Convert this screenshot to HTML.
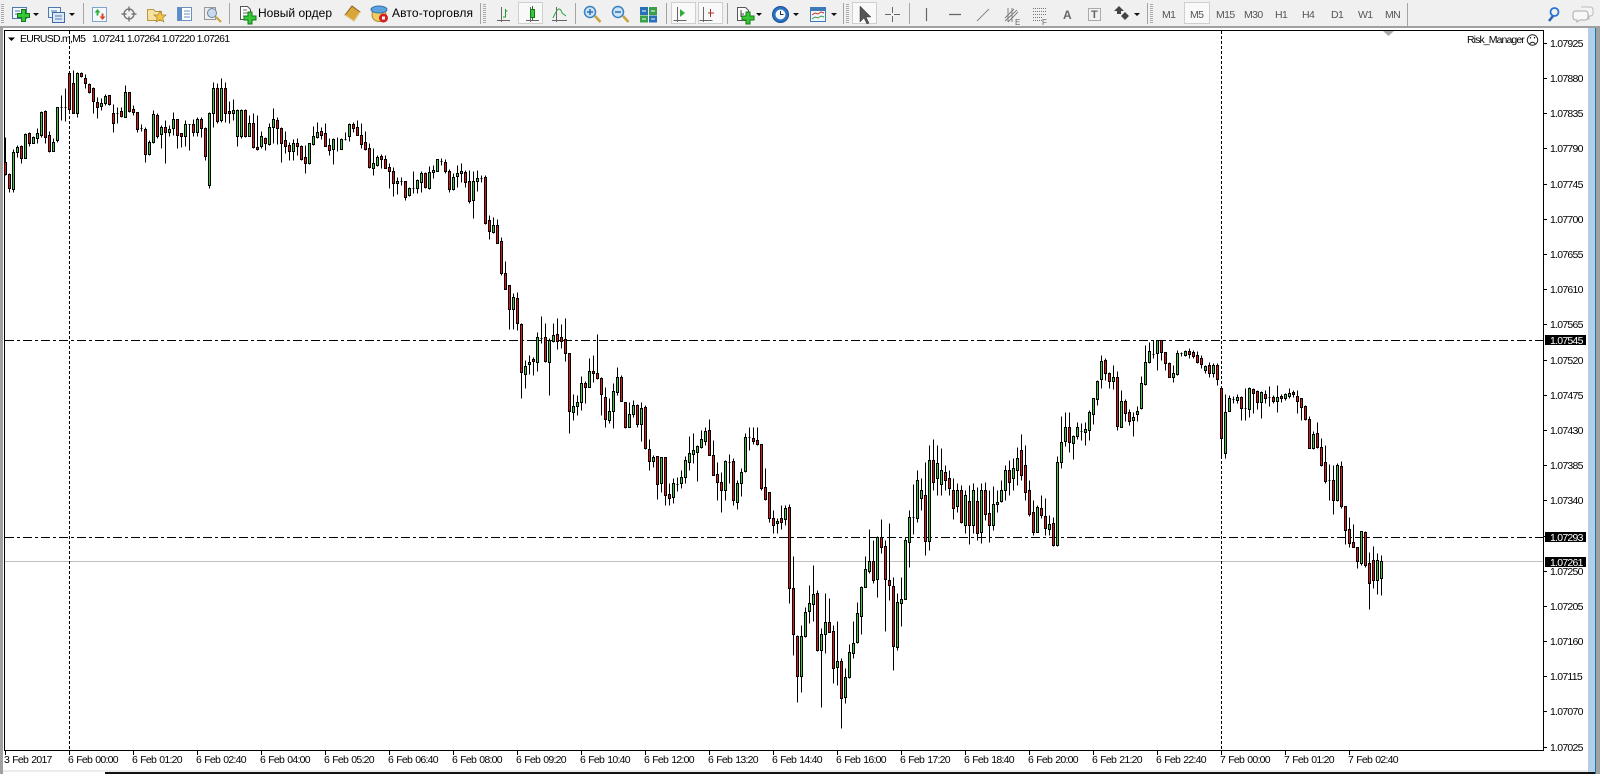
<!DOCTYPE html>
<html><head><meta charset="utf-8"><title>EURUSD.m,M5</title>
<style>
html,body{margin:0;padding:0;background:#fff;width:1600px;height:774px;overflow:hidden}
svg{display:block;position:absolute;left:0;top:0}
text{font-family:"Liberation Sans","Noto Sans CJK SC",sans-serif;fill:#000}
.a text,.a{font-size:10.5px;letter-spacing:-.75px}
.t text{word-spacing:1px}
.tf text{font-size:10.5px;letter-spacing:-.6px;fill:#555}
.bx{fill:#fff}
.gt{fill:#666}
</style></head><body>
<svg width="1600" height="774" viewBox="0 0 1600 774" xmlns="http://www.w3.org/2000/svg">
<defs><path id="plus" d="M-2-6h4v4h4v4h-4v4h-4v-4h-4v-4h4z" fill="#35c935" stroke="#16761a"/></defs>
<!-- frame -->
<rect width="1600" height="774" fill="#fff"/>
<rect x="0" y="0" width="1600" height="26" fill="#f0f0f0"/>
<rect x="0" y="26" width="1600" height="2" fill="#a0a0a0"/>
<rect x="0" y="28" width="3" height="746" fill="#a0a0a0"/>
<rect x="1588" y="28" width="7" height="746" fill="#b4cde8"/>
<rect x="1595" y="28" width="1" height="746" fill="#0a80a8"/>
<rect x="1596" y="28" width="4" height="746" fill="#a0a0a0"/>
<rect x="105" y="772" width="1490" height="2" fill="#111"/>
<rect x="3" y="770" width="1585" height="2" fill="#ececec"/>
<!-- chart lines -->
<g shape-rendering="crispEdges" fill="none">
<path d="M5 561.5H1543" stroke="#c0c0c0"/>
<path d="M5 340.5H1543M5 537.5H1543" stroke="#000" stroke-dasharray="9 3 3 3"/>
<path d="M69.5 31V750M1221.5 31V750" stroke="#000" stroke-dasharray="3 2"/>
</g>
<!-- candles -->
<g transform="translate(.5 .5)" shape-rendering="crispEdges" stroke="#000" stroke-width="1">
<path fill="none" d="M5 137V175M9 173V192M13 149V192M17 145V157M21 145V163M25 133V158M29 132V146M33 136V143M37 128V143M41 111V137M45 110V143M49 131V152M53 138V151M57 107V142M61 95V120M65 88V121M69 72V113M73 70V113M77 72V117M81 72V77M85 74V88M89 83V93M93 87V113M97 97V118M101 98V110M105 94V105M109 95V105M113 104V132M117 107V123M121 107V117M125 85V117M129 92V112M133 105V115M137 112V132M141 124V131M145 127V162M149 140V155M153 110V143M157 113V138M161 125V148M165 120V163M169 125V136M173 112V135M177 119V148M181 133V147M185 120V146M189 124V150M193 119V136M197 117V136M201 117V137M205 127V160M209 112V188M213 82V127M217 83V123M221 78V122M225 82V122M229 101V123M233 99V120M237 109V146M241 109V138M245 109V137M249 115V136M253 113V148M257 115V150M261 131V148M265 137V150M269 123V145M273 108V143M277 117V144M281 127V162M285 131V153M289 142V160M293 139V160M297 138V155M301 145V160M305 145V173M309 143V164M313 126V145M317 122V138M321 127V139M325 123V146M329 138V155M333 138V164M337 137V151M341 138V149M345 132V140M349 123V141M353 122V132M357 120V135M361 123V148M365 131V150M369 143V168M373 148V175M377 155V166M381 154V168M385 155V168M389 163V188M393 167V196M397 177V194M401 177V185M405 181V200M409 187V196M413 171V193M417 179V193M421 171V192M425 172V188M429 166V189M433 165V178M437 159V171M441 158V165M445 159V173M449 169V192M453 173V190M457 165V187M461 163V182M465 170V187M469 170V203M473 171V218M477 170V191M481 175V182M485 175V224M489 215V239M493 217V233M497 219V243M501 237V275M505 261V289M509 285V329M513 293V329M517 292V330M521 323V398M525 360V388M529 355V374M533 357V375M537 332V371M541 316V343M545 323V362M549 338V395M553 323V342M557 318V349M561 324V348M565 318V361M569 353V433M573 394V420M577 395V415M581 376V410M585 381V403M589 358V387M593 355V382M597 334V379M601 377V415M605 387V427M609 398V423M613 383V428M617 367V395M621 375V401M625 402V428M629 402V427M633 400V417M637 404V427M641 402V441M645 405V449M649 439V470M653 455V467M657 456V499M661 457V492M665 457V505M669 483V505M673 478V503M677 477V491M681 470V488M685 456V483M689 436V470M693 433V463M697 445V481M701 430V448M705 427V445M709 419V455M713 440V475M717 462V500M721 472V512M725 460V500M729 454V483M733 458V505M737 480V509M741 468V496M745 433V472M749 427V450M753 427V444M757 427V445M761 444V490M765 468V500M769 492V522M773 510V533M777 518V533M781 505V529M785 505V525M789 504V603M793 556V655M797 635V702M801 625V692M805 607V637M809 585V623M813 565V621M817 590V651M821 628V707M825 593V653M829 598V632M833 625V683M837 621V685M841 658V728M845 668V703M849 644V678M853 621V658M857 602V643M861 586V634M865 556V587M869 529V573M873 540V583M877 536V597M881 519V553M885 540V631M889 523V600M893 577V670M897 593V650M901 577V626M905 537V599M909 510V567M913 484V534M917 470V522M921 478V510M925 462V555M929 445V550M933 439V490M937 445V495M941 448V495M945 465V490M949 470V495M953 478V519M957 483V512M961 485V523M965 490V533M969 485V544M973 483V533M977 487V540M981 483V543M985 482V520M989 490V542M993 486V530M997 490V512M1001 480V502M1005 465V500M1009 460V495M1013 458V490M1017 447V485M1021 434V480M1025 445V500M1029 480V516M1033 500V535M1037 505V532M1041 495V518M1045 498V535M1049 515V535M1053 517V546M1057 456V546M1061 416V468M1065 412V446M1069 412V452M1073 435V459M1077 422V439M1081 423V440M1085 422V445M1089 410V440M1093 398V424M1097 380V405M1101 355V388M1105 358V380M1109 372V388M1113 365V389M1117 371V430M1121 390V427M1125 399V421M1129 409V425M1133 412V436M1137 406V421M1141 376V409M1145 345V385M1149 342V363M1153 340V358M1157 340V370M1161 340V360M1165 352V370M1169 362V377M1173 365V382M1177 350V375M1181 352V356M1185 350V356M1189 348V358M1193 350V358M1197 351V363M1201 355V368M1205 365V373M1209 362V377M1213 363V377M1217 363V385M1221 388V458M1225 394V458M1229 395V411M1233 396V403M1237 394V403M1241 396V420M1245 388V420M1249 387V417M1253 388V413M1257 390V409M1261 391V418M1265 390V403M1269 386V406M1273 395V403M1277 385V412M1281 394V402M1285 393V400M1289 388V398M1293 390V397M1297 390V413M1301 398V420M1305 405V420M1309 416V448M1313 431V449M1317 422V448M1321 438V466M1325 445V483M1329 464V500M1333 465V514M1337 463V501M1341 461V508M1345 506V544M1349 517V547M1353 524V547M1357 547V568M1361 531V565M1365 531V567M1369 552V609M1373 546V588M1377 553V594M1381 555V595M60 107h2M64 107h2M116 113h2M140 128h2M188 124h2M344 139h2M400 181h2M412 188h2M440 161h2M480 178h2M540 338h2M676 484h2M728 462h2M748 437h2M912 517h2M1080 431h2M1152 354h2M1180 353h2M1232 399h2M1244 408h2M1268 397h2M1328 480h2"/>
<path fill="#3cc83c" d="M12 152h2V189h-2zM16 147h2V152h-2zM24 134h2V158h-2zM32 137h2V143h-2zM36 133h2V138h-2zM40 112h2V135h-2zM52 142h2V151h-2zM56 107h2V140h-2zM76 73h2V113h-2zM100 103h2V106h-2zM104 96h2V103h-2zM124 92h2V117h-2zM148 142h2V154h-2zM152 114h2V142h-2zM160 127h2V134h-2zM168 129h2V132h-2zM172 119h2V128h-2zM184 124h2V136h-2zM196 119h2V132h-2zM208 113h2V185h-2zM212 88h2V113h-2zM220 88h2V120h-2zM232 110h2V113h-2zM236 110h2V136h-2zM240 110h2V136h-2zM248 123h2V136h-2zM260 136h2V146h-2zM268 127h2V144h-2zM272 119h2V127h-2zM292 143h2V151h-2zM308 143h2V163h-2zM312 136h2V144h-2zM316 132h2V137h-2zM332 139h2V149h-2zM340 139h2V149h-2zM348 124h2V136h-2zM372 163h2V168h-2zM376 157h2V165h-2zM396 181h2V183h-2zM408 188h2V195h-2zM416 180h2V188h-2zM420 173h2V182h-2zM428 172h2V188h-2zM432 170h2V172h-2zM436 159h2V171h-2zM452 177h2V189h-2zM456 173h2V176h-2zM460 171h2V173h-2zM472 181h2V200h-2zM476 178h2V181h-2zM492 225h2V232h-2zM512 297h2V309h-2zM524 366h2V374h-2zM528 362h2V364h-2zM536 337h2V362h-2zM548 340h2V362h-2zM552 335h2V341h-2zM572 406h2V412h-2zM576 402h2V406h-2zM580 383h2V402h-2zM588 371h2V387h-2zM608 411h2V420h-2zM612 391h2V411h-2zM616 377h2V392h-2zM628 414h2V427h-2zM632 405h2V414h-2zM640 408h2V424h-2zM652 457h2V461h-2zM660 457h2V483h-2zM672 483h2V497h-2zM680 477h2V483h-2zM684 460h2V477h-2zM688 453h2V462h-2zM692 450h2V454h-2zM696 446h2V452h-2zM700 439h2V447h-2zM704 431h2V441h-2zM724 461h2V490h-2zM736 483h2V502h-2zM740 472h2V483h-2zM744 437h2V471h-2zM776 521h2V523h-2zM784 508h2V519h-2zM800 636h2V676h-2zM804 612h2V636h-2zM808 603h2V611h-2zM812 594h2V604h-2zM820 634h2V650h-2zM824 622h2V634h-2zM836 661h2V667h-2zM844 677h2V697h-2zM848 652h2V677h-2zM852 643h2V653h-2zM856 613h2V642h-2zM860 587h2V616h-2zM864 569h2V587h-2zM868 561h2V571h-2zM876 537h2V579h-2zM896 602h2V647h-2zM900 599h2V603h-2zM904 540h2V599h-2zM908 517h2V542h-2zM916 480h2V518h-2zM920 490h2V498h-2zM928 460h2V541h-2zM936 463h2V478h-2zM940 470h2V484h-2zM956 490h2V506h-2zM964 495h2V525h-2zM972 490h2V525h-2zM980 490h2V532h-2zM992 504h2V525h-2zM996 502h2V504h-2zM1000 490h2V501h-2zM1004 470h2V490h-2zM1012 468h2V478h-2zM1016 458h2V470h-2zM1036 507h2V532h-2zM1048 524h2V529h-2zM1056 462h2V545h-2zM1060 442h2V462h-2zM1064 427h2V441h-2zM1072 436h2V443h-2zM1076 427h2V436h-2zM1084 429h2V432h-2zM1088 412h2V430h-2zM1092 398h2V414h-2zM1096 381h2V399h-2zM1100 361h2V379h-2zM1112 377h2V381h-2zM1120 401h2V427h-2zM1132 417h2V420h-2zM1136 411h2V414h-2zM1140 383h2V408h-2zM1144 362h2V384h-2zM1148 351h2V362h-2zM1156 340h2V353h-2zM1172 373h2V377h-2zM1176 353h2V374h-2zM1184 351h2V355h-2zM1204 366h2V370h-2zM1212 365h2V373h-2zM1224 412h2V453h-2zM1228 398h2V411h-2zM1236 397h2V400h-2zM1248 388h2V409h-2zM1260 392h2V402h-2zM1276 397h2V401h-2zM1284 394h2V398h-2zM1288 393h2V396h-2zM1312 434h2V448h-2zM1336 465h2V500h-2zM1360 531h2V563h-2zM1376 560h2V580h-2zM1380 561h2V578h-2z"/>
<path fill="#e01414" d="M4 162h2V174h-2zM8 174h2V188h-2zM20 146h2V158h-2zM28 133h2V143h-2zM44 111h2V137h-2zM48 135h2V151h-2zM68 73h2V109h-2zM72 83h2V113h-2zM80 73h2V76h-2zM84 78h2V83h-2zM88 84h2V92h-2zM92 88h2V101h-2zM96 102h2V107h-2zM108 95h2V104h-2zM112 113h2V123h-2zM120 111h2V116h-2zM128 92h2V111h-2zM132 109h2V112h-2zM136 112h2V129h-2zM144 129h2V154h-2zM156 115h2V136h-2zM164 127h2V132h-2zM176 119h2V135h-2zM180 133h2V136h-2zM192 124h2V132h-2zM200 119h2V128h-2zM204 128h2V156h-2zM216 88h2V121h-2zM224 88h2V113h-2zM228 111h2V113h-2zM244 110h2V136h-2zM252 123h2V147h-2zM256 147h2V149h-2zM264 138h2V143h-2zM276 120h2V128h-2zM280 128h2V143h-2zM284 140h2V146h-2zM288 145h2V151h-2zM296 143h2V146h-2zM300 146h2V159h-2zM304 157h2V163h-2zM320 131h2V135h-2zM324 133h2V146h-2zM328 145h2V150h-2zM352 124h2V128h-2zM356 127h2V135h-2zM360 135h2V144h-2zM364 142h2V149h-2zM368 148h2V167h-2zM380 156h2V159h-2zM384 159h2V168h-2zM388 167h2V171h-2zM392 171h2V183h-2zM404 181h2V197h-2zM424 173h2V187h-2zM444 162h2V171h-2zM448 171h2V189h-2zM464 172h2V182h-2zM468 181h2V201h-2zM484 177h2V223h-2zM488 220h2V231h-2zM496 225h2V243h-2zM500 241h2V273h-2zM504 273h2V289h-2zM508 285h2V309h-2zM516 298h2V323h-2zM520 324h2V372h-2zM532 359h2V361h-2zM544 337h2V361h-2zM556 334h2V341h-2zM560 337h2V341h-2zM564 339h2V353h-2zM568 353h2V411h-2zM584 383h2V387h-2zM592 371h2V373h-2zM596 373h2V378h-2zM600 378h2V394h-2zM604 397h2V419h-2zM620 377h2V401h-2zM624 402h2V427h-2zM636 405h2V424h-2zM644 407h2V448h-2zM648 449h2V461h-2zM656 456h2V484h-2zM664 457h2V495h-2zM668 494h2V498h-2zM708 430h2V455h-2zM712 455h2V475h-2zM716 474h2V482h-2zM720 482h2V490h-2zM732 461h2V500h-2zM752 438h2V441h-2zM756 440h2V444h-2zM760 444h2V488h-2zM764 487h2V499h-2zM768 492h2V518h-2zM772 518h2V525h-2zM780 518h2V522h-2zM788 507h2V588h-2zM792 588h2V634h-2zM796 636h2V676h-2zM816 593h2V650h-2zM828 622h2V632h-2zM832 631h2V668h-2zM840 661h2V698h-2zM872 561h2V580h-2zM880 537h2V547h-2zM884 546h2V579h-2zM888 580h2V585h-2zM892 586h2V646h-2zM924 495h2V541h-2zM932 460h2V482h-2zM944 472h2V480h-2zM948 478h2V488h-2zM952 490h2V508h-2zM960 490h2V522h-2zM968 501h2V525h-2zM976 501h2V533h-2zM984 490h2V514h-2zM988 513h2V525h-2zM1008 470h2V482h-2zM1020 450h2V475h-2zM1024 465h2V492h-2zM1028 490h2V514h-2zM1032 512h2V532h-2zM1040 508h2V515h-2zM1044 516h2V528h-2zM1052 523h2V545h-2zM1068 427h2V442h-2zM1104 360h2V373h-2zM1108 373h2V381h-2zM1116 377h2V426h-2zM1124 401h2V413h-2zM1128 412h2V421h-2zM1160 340h2V352h-2zM1164 352h2V363h-2zM1168 363h2V377h-2zM1188 351h2V354h-2zM1192 352h2V356h-2zM1196 355h2V362h-2zM1200 358h2V364h-2zM1208 365h2V373h-2zM1216 365h2V379h-2zM1220 388h2V438h-2zM1240 397h2V408h-2zM1252 389h2V393h-2zM1256 391h2V402h-2zM1264 394h2V398h-2zM1272 397h2V401h-2zM1280 396h2V398h-2zM1292 392h2V394h-2zM1296 396h2V401h-2zM1300 398h2V407h-2zM1304 406h2V419h-2zM1308 419h2V448h-2zM1316 433h2V447h-2zM1320 447h2V465h-2zM1324 462h2V481h-2zM1332 480h2V500h-2zM1340 466h2V506h-2zM1344 506h2V530h-2zM1348 529h2V543h-2zM1352 542h2V547h-2zM1356 547h2V561h-2zM1364 532h2V565h-2zM1368 563h2V583h-2zM1372 560h2V580h-2z"/>
</g>
<!-- chart border and axes -->
<g shape-rendering="crispEdges" fill="none" stroke="#000">
<path d="M4.5 30.5H1543.5V750.5H4.5Z"/>
<path d="M1543 43.5h4M1543 78.5h4M1543 113.5h4M1543 148.5h4M1543 184.5h4M1543 219.5h4M1543 254.5h4M1543 289.5h4M1543 324.5h4M1543 360.5h4M1543 395.5h4M1543 430.5h4M1543 465.5h4M1543 500.5h4M1543 536.5h4M1543 571.5h4M1543 606.5h4M1543 641.5h4M1543 676.5h4M1543 711.5h4M1543 747.5h4"/>
<path d="M5.5 750v5M69.5 750v5M133.5 750v5M197.5 750v5M261.5 750v5M325.5 750v5M389.5 750v5M453.5 750v5M517.5 750v5M581.5 750v5M645.5 750v5M709.5 750v5M773.5 750v5M837.5 750v5M901.5 750v5M965.5 750v5M1029.5 750v5M1093.5 750v5M1157.5 750v5M1221.5 750v5M1285.5 750v5M1349.5 750v5"/>
</g>
<g class="a">
<text x="1550" y="47">1.07925</text><text x="1550" y="82">1.07880</text><text x="1550" y="117">1.07835</text><text x="1550" y="152">1.07790</text><text x="1550" y="188">1.07745</text><text x="1550" y="223">1.07700</text><text x="1550" y="258">1.07655</text><text x="1550" y="293">1.07610</text><text x="1550" y="328">1.07565</text><text x="1550" y="364">1.07520</text><text x="1550" y="399">1.07475</text><text x="1550" y="434">1.07430</text><text x="1550" y="469">1.07385</text><text x="1550" y="504">1.07340</text><text x="1550" y="575">1.07250</text><text x="1550" y="610">1.07205</text><text x="1550" y="645">1.07160</text><text x="1550" y="680">1.07115</text><text x="1550" y="715">1.07070</text><text x="1550" y="751">1.07025</text>
<rect x="1545" y="335" width="41" height="10" fill="#000"/><text class="bx" x="1550" y="344">1.07545</text>
<rect x="1545" y="532" width="41" height="10" fill="#000"/><text class="bx" x="1550" y="541">1.07293</text>
<rect x="1545" y="557" width="41" height="10" fill="#000"/><text class="bx" x="1550" y="566">1.07261</text>
<g class="t"><text x="4" y="763">3 Feb 2017</text><text x="68" y="763">6 Feb 00:00</text><text x="132" y="763">6 Feb 01:20</text><text x="196" y="763">6 Feb 02:40</text><text x="260" y="763">6 Feb 04:00</text><text x="324" y="763">6 Feb 05:20</text><text x="388" y="763">6 Feb 06:40</text><text x="452" y="763">6 Feb 08:00</text><text x="516" y="763">6 Feb 09:20</text><text x="580" y="763">6 Feb 10:40</text><text x="644" y="763">6 Feb 12:00</text><text x="708" y="763">6 Feb 13:20</text><text x="772" y="763">6 Feb 14:40</text><text x="836" y="763">6 Feb 16:00</text><text x="900" y="763">6 Feb 17:20</text><text x="964" y="763">6 Feb 18:40</text><text x="1028" y="763">6 Feb 20:00</text><text x="1092" y="763">6 Feb 21:20</text><text x="1156" y="763">6 Feb 22:40</text><text x="1220" y="763">7 Feb 00:00</text><text x="1284" y="763">7 Feb 01:20</text><text x="1348" y="763">7 Feb 02:40</text></g>
<text x="20" y="42">EURUSD.m,M5</text><text x="92" y="42">1.07241 1.07264 1.07220 1.07261</text>
<text x="1467" y="43" textLength="57">Risk_Manager</text>
</g>
<path d="M8 37.5h7l-3.500 3.500z" fill="#000"/>
<path d="M1383 31h11l-5.500 5z" fill="#aaa"/>
<g fill="none" stroke="#222"><circle cx="1532.500" cy="40" r="5.200"/><path d="M1529.500 44q3-3.500 6 0"/><path d="M1530.500 37v1.500M1534.500 37v1.500" stroke-width="1.200"/></g>
<!-- toolbar pressed buttons -->
<g fill="#f9f9f9" stroke="#cfcfcf" shape-rendering="crispEdges">
<rect x="518.500" y="2.500" width="24" height="21"/><rect x="671.500" y="2.500" width="24" height="21"/><rect x="698.500" y="2.500" width="24" height="21"/><rect x="852.500" y="2.500" width="24" height="21"/><rect x="1184.500" y="2.500" width="25" height="21"/>
</g>
<!-- separators / grips -->
<path shape-rendering="crispEdges" stroke="#a4a4a4" fill="none" d="M83.500 3V24M229.500 3V24M480.500 3V24M575.500 3V24M666.500 3V24M727.500 3V24M843.500 3V24M909.500 3V24M1147.500 3V24M1407.500 3V26"/>
<path shape-rendering="crispEdges" stroke="#aaa" stroke-width="3" stroke-dasharray="1 1" fill="none" d="M2.500 4V24M484.500 4V24M847.500 4V24M1151.500 4V24"/>
<!-- dropdown arrows -->
<path fill="#111" d="M33 13h6l-3 3zM69 13h6l-3 3zM756 13h6l-3 3zM793 13h6l-3 3zM831 13h6l-3 3zM1134 13h6l-3 3z"/>
<!-- new chart -->
<rect x="12.500" y="7.500" width="14" height="11" fill="#f2f7fd" stroke="#4f78ad"/><path d="M15 11h5M15 14h4" stroke="#4f78ad"/><use href="#plus" x="23.500" y="15.500"/>
<!-- profiles -->
<rect x="48.500" y="7.500" width="12" height="10" fill="#eef4fb" stroke="#4f78ad"/><rect x="52.500" y="12.500" width="12" height="10" fill="#dbe8f7" stroke="#3e6aa3"/><path d="M51 11h6M55 16h7M55 19h7" stroke="#4f78ad"/>
<!-- market watch -->
<rect x="92.500" y="7.500" width="14" height="14" fill="#f5f9fd" stroke="#7da4cc"/><path d="M97.500 9l3 3.500h-2v3h-2v-3h-2z" fill="#2fae3d"/><path d="M102.500 20l3-3.500h-2v-3h-2v3h-2z" fill="#d84a20"/>
<!-- crosshair circle -->
<g fill="none" stroke="#777" stroke-width="1.400"><circle cx="129" cy="14" r="5"/><path d="M129 6.500v5M129 16.500v5M121.500 14h5M131.500 14h5"/></g>
<!-- folder star -->
<path d="M147.500 9.500h6l2 2h6v9h-14z" fill="#f6e2a0" stroke="#b8983c"/><path d="M160 11l1.800 4h4.200l-3.300 2.800 1.100 4.200-3.800-2.300-3.800 2.300 1.100-4.200-3.300-2.800h4.200z" fill="#f2c746" stroke="#a8842a" stroke-width=".7"/>
<!-- navigator -->
<rect x="177.500" y="7.500" width="14" height="13" fill="#fff" stroke="#6a8fc0"/><rect x="178" y="8" width="4" height="12" fill="#5b8cc8"/><path d="M184 11h6M184 14h6M184 17h6" stroke="#6a8fc0"/>
<!-- magnifier doc -->
<rect x="204.500" y="7.500" width="11" height="12" fill="#eee" stroke="#999"/><path d="M216 17l5 5" stroke="#c9a23a" stroke-width="2"/><circle cx="212" cy="13" r="4.500" fill="#c8dbee" stroke="#6f84a0"/>
<!-- new order -->
<path d="M240.500 6.500h7l3 3v10h-10z" fill="#fff" stroke="#555"/><path d="M243 10h4M243 13h5M243 16h3" stroke="#666"/><use href="#plus" x="250" y="18"/>
<text x="258" y="17" font-size="12" textLength="74">Новый ордер</text>
<!-- book -->
<path d="M345 15l7-9 8 6-6 9z" fill="#d8a63a" stroke="#8a6420"/><path d="M345 15l9 6 6-9" fill="none" stroke="#f2d68a"/>
<!-- auto -->
<ellipse cx="379" cy="15" rx="7" ry="6.500" fill="#f0cc60" stroke="#a8882c"/><ellipse cx="379" cy="9.500" rx="8" ry="3.500" fill="#5ba4e0" stroke="#2f6fa8"/><circle cx="383.500" cy="18" r="4.500" fill="#d42020"/><rect x="382" y="16.500" width="3" height="3" fill="#fff"/>
<text x="392" y="17" font-size="12" textLength="81">Авто-торговля</text>
<!-- chart type icons -->
<g fill="none" stroke="#666"><path d="M501.500 7v15M497 20.500h13M530.500 7v15M526 20.500h13M556.500 7v15M552 20.500h15M677.500 7v15M673.500 20.500h13M703.500 7v15M699.500 20.500h13"/></g>
<path d="M505.500 9v8M503 17h3M505.500 11h2" fill="none" stroke="#1f9a2e"/>
<rect x="530.500" y="9.500" width="4" height="8" fill="#35c935" stroke="#16761a"/><path d="M532.500 6v3M532.500 18v2" stroke="#16761a"/>
<path d="M553 18q4-9 6-9t3 4l4 3" fill="none" stroke="#2aa03a"/>
<path d="M680 9l5 4-5 4z" fill="#2fae3d"/><path d="M708 13h6M710.500 9v8" stroke="#b03020"/>
<!-- zoom in/out -->
<path d="M595 16l5.500 6" stroke="#c9a23a" stroke-width="2.500"/><circle cx="590" cy="12" r="5.500" fill="#cfe4f7" stroke="#3a80c0" stroke-width="1.500"/><path d="M587 12h6M590 9v6" stroke="#2a6fb0" stroke-width="1.500"/>
<path d="M623 16l5.500 6" stroke="#c9a23a" stroke-width="2.500"/><circle cx="618" cy="12" r="5.500" fill="#cfe4f7" stroke="#3a80c0" stroke-width="1.500"/><path d="M615 12h6" stroke="#2a6fb0" stroke-width="1.500"/>
<!-- tile -->
<rect x="640" y="7" width="8" height="8" fill="#2a70b8"/><rect x="649" y="7" width="8" height="8" fill="#3aa048"/><rect x="640" y="15.500" width="8" height="7" fill="#3aa048"/><rect x="649" y="15.500" width="8" height="7" fill="#2a70b8"/><path d="M642 11h4M651 11h4M642 19h4M651 19h4" stroke="#fff"/>
<!-- indicators -->
<path d="M737.500 7.500h8l3 3v10h-11z" fill="#fff" stroke="#555"/><path d="M741 10v7M741 14h3" stroke="#444"/><use href="#plus" x="748" y="18"/>
<!-- clock -->
<circle cx="780.500" cy="14.500" r="8" fill="#2a72c4" stroke="#1b4f94"/><circle cx="780.500" cy="14.500" r="5" fill="#f4f7fb"/><path d="M780.500 11v3.500h3" fill="none" stroke="#333"/>
<!-- templates -->
<rect x="810.500" y="7.500" width="15" height="14" fill="#f0f6fc" stroke="#3d78b8"/><rect x="811" y="8" width="14" height="3" fill="#3d78b8"/><path d="M812 15l3-2 3 1 3-2 3 1" fill="none" stroke="#c83020"/><path d="M812 19l3-2 3 1 3-2 3 1" fill="none" stroke="#2fa03a"/>
<!-- cursor -->
<path d="M860 6v16l4-4 3 6 2-1-3-6h5z" fill="#555" stroke="#333" stroke-width=".5"/>
<!-- crosshair -->
<path d="M885 14.500h6M894 14.500h6M892.500 7v6M892.500 16v6" stroke="#666" fill="none"/>
<!-- line tools -->
<path d="M926.500 8v13M949 14.500h12" stroke="#666" fill="none" stroke-width="1.200"/><path d="M977 21l12-12" stroke="#888" fill="none"/>
<path d="M1005 18l9-9M1005 21l12-11M1008 22l10-10M1008 8v14M1012 8v14" stroke="#777" fill="none" stroke-width=".9"/>
<text class="gt" x="1015" y="25" font-size="8">E</text>
<path d="M1033 8.500h13M1033 11.500h13M1033 14.500h13M1033 17.500h9M1033 20.500h9" stroke="#777" stroke-dasharray="1 1" fill="none"/>
<text class="gt" x="1042" y="25" font-size="8">F</text>
<text class="gt" x="1063" y="19" font-size="12" font-weight="bold">A</text>
<rect x="1088.500" y="8.500" width="12" height="12" fill="none" stroke="#666" stroke-dasharray="1 1"/><text class="gt" x="1091" y="18" font-size="11" font-weight="bold">T</text>
<path d="M1120 8l5 5h-3v3h-4v-3h-3zM1126 14l4 4-4 4-4-4z" fill="#444" transform="translate(-1 -2)"/>
<!-- timeframes -->
<g class="tf"><text x="1162" y="18">M1</text><text x="1190" y="18">M5</text><text x="1216" y="18">M15</text><text x="1244" y="18">M30</text><text x="1275" y="18">H1</text><text x="1302" y="18">H4</text><text x="1331" y="18">D1</text><text x="1358" y="18">W1</text><text x="1385" y="18">MN</text></g>
<!-- search / chat -->
<path d="M1549 21l4-5" stroke="#2a62b0" stroke-width="2.500"/><circle cx="1554.500" cy="12" r="4" fill="none" stroke="#2a72d0" stroke-width="1.800"/>
<path d="M1581 7h9q3 0 3 3v3q0 3-3 3h-1l0 3-4-3" fill="#f4f4f4" stroke="#bbb"/><path d="M1576 11h9q3 0 3 3v3q0 3-3 3h-5l-3 2v-2h-1q-3 0-3-3v-3q0-3 3-3z" fill="#f8f8f8" stroke="#aaa"/>
</svg>
</body></html>
